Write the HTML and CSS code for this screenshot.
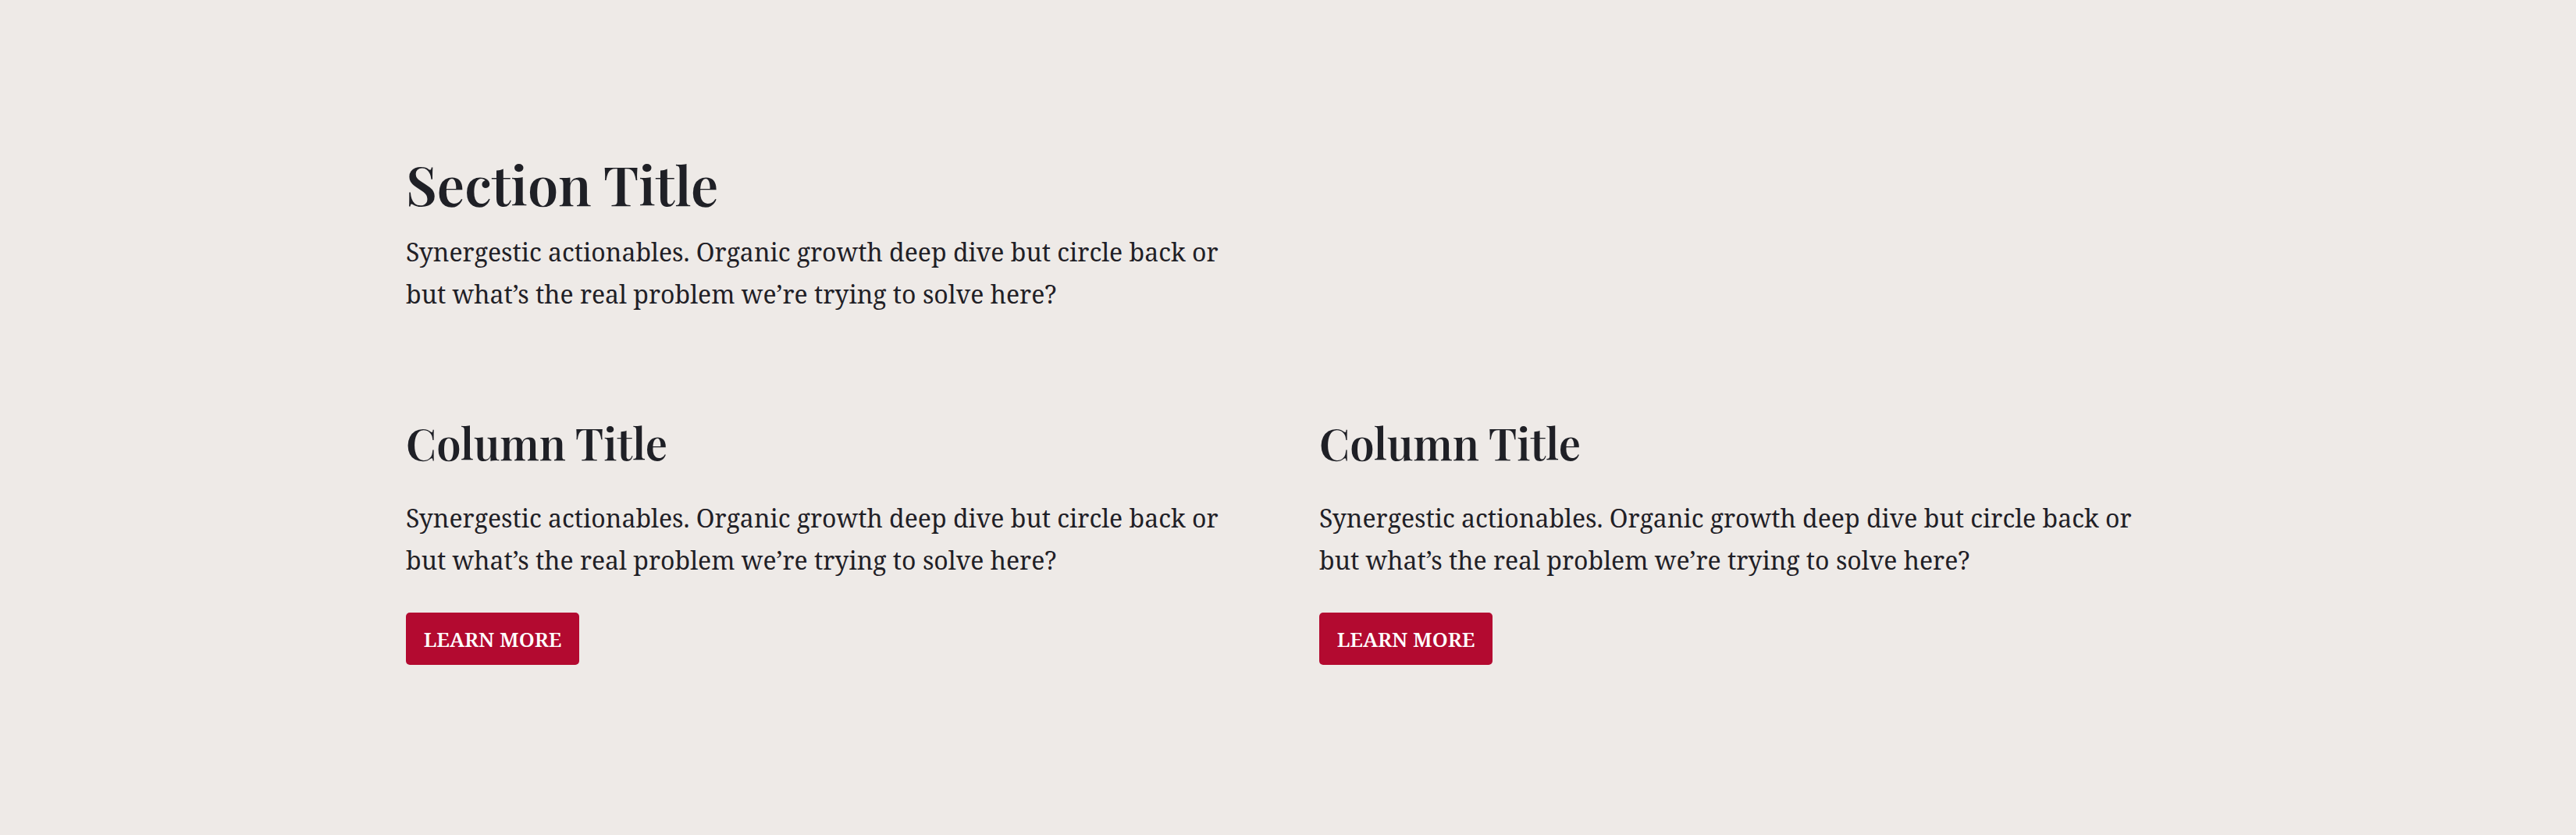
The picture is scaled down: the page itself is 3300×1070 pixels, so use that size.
FILE: index.html
```html
<!DOCTYPE html>
<html lang="en">
<head>
<meta charset="utf-8">
<title>Section</title>
<link rel="stylesheet" href="styles.css">
</head>
<body>
<main class="section">
  <header class="intro">
    <h1 class="section-title">Section Title</h1>
    <p class="text">Synergestic actionables. Organic growth deep dive but circle back or but what’s the real problem we’re trying to solve here?</p>
  </header>
  <div class="columns">
    <article class="column">
      <h2 class="column-title">Column Title</h2>
      <p class="text">Synergestic actionables. Organic growth deep dive but circle back or but what’s the real problem we’re trying to solve here?</p>
      <a class="button" href="#">LEARN MORE</a>
    </article>
    <article class="column">
      <h2 class="column-title">Column Title</h2>
      <p class="text">Synergestic actionables. Organic growth deep dive but circle back or but what’s the real problem we’re trying to solve here?</p>
      <a class="button" href="#">LEARN MORE</a>
    </article>
  </div>
</main>
</body>
</html>
```

FILE: styles.css
```css
html, body {
  margin: 0;
  padding: 0;
}
body {
  background: #eeeae7;
  color: #1f2026;
  font-family: "Noto Serif", "Liberation Serif", serif;
  height: 1070px;
  overflow: hidden;
}
.section {
  width: 2260px;
  margin: 0 auto;
  padding-top: 193px;
}
.intro {
  width: 1090px;
}
.section-title {
  margin: 0;
  font-family: "Playfair Display", "Liberation Serif", serif;
  font-weight: 600;
  font-size: 70px;
  line-height: 84px;
}
.text {
  margin: 19px 0 0;
  font-size: 32px;
  line-height: 54px;
  max-width: 1060px;
}
.columns {
  display: grid;
  grid-template-columns: 1090px 1090px;
  column-gap: 80px;
  margin-top: 129px;
}
.column {
  display: flex;
  flex-direction: column;
  align-items: flex-start;
}
.column-title {
  margin: 0;
  font-family: "Playfair Display", "Liberation Serif", serif;
  font-weight: 600;
  font-size: 56px;
  line-height: 67px;
}
.column .text {
  margin-top: 37px;
}
.button {
  margin-top: 40px;
  display: inline-block;
  box-sizing: border-box;
  height: 67px;
  width: 222px;
  padding-top: 1px;
  text-align: center;
  line-height: 66px;
  background: #b30a30;
  color: #ffffff;
  border-radius: 5px;
  text-decoration: none;
  font-size: 26px;
  font-weight: 600;
}
```
